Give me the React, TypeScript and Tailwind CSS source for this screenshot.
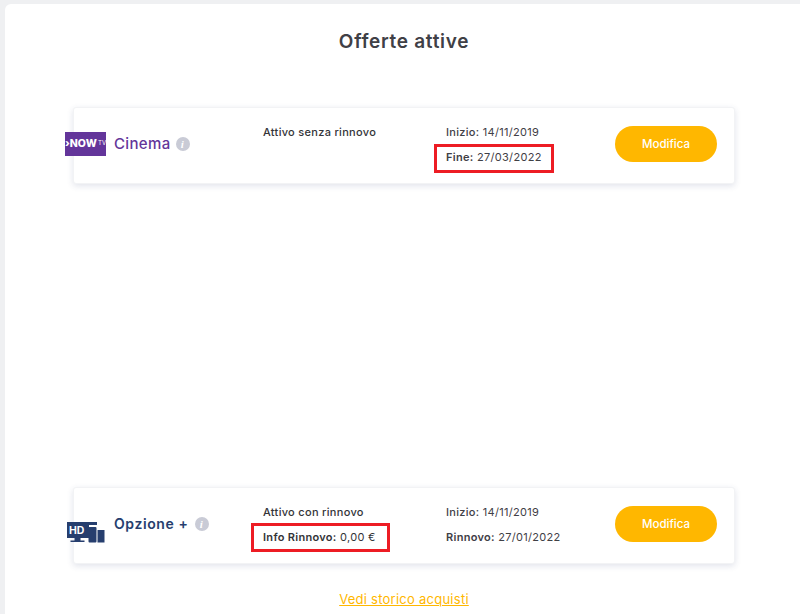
const font = { fontFamily: '"Inter", "Liberation Sans", sans-serif' };

function Info() {
  return (
    <span className="w-[14px] h-[14px] rounded-full bg-[#c9cbd6] flex items-center justify-center text-white text-[11px] leading-none font-bold italic font-['Liberation_Serif',serif]">
      i
    </span>
  );
}

function NowLogo() {
  return (
    <div className="w-[41px] h-[24px] -ml-2 bg-[#63359a] flex items-center justify-center shrink-0">
      <span className="text-white text-[10.500px] leading-none font-extrabold whitespace-nowrap tracking-[0.1px] flex items-center">
        ›NOW<span className="text-[6px] font-normal -mt-[3px] ml-px">TV</span>
      </span>
    </div>
  );
}

function HdLogo() {
  return (
    <svg width="38" height="21" viewBox="0 0 38 21" className="-ml-[7px] mt-[34px] shrink-0">
      <path d="M0 0h30v3h-8v13H0z" fill="#263e6e" />
      <path d="M7.500 16h6v2.500h4V20h-14v-1.500h4z" fill="#263e6e" />
      <rect x="21.500" y="5" width="8" height="15.500" rx="1" fill="#263e6e" />
      <rect x="30.500" y="8" width="7" height="12.500" fill="#263e6e" />
      <text x="2" y="12" fill="#fff" fontSize="10.500" fontWeight="700" fontFamily="Inter, sans-serif">HD</text>
    </svg>
  );
}

function Card({ logo, status, extra, start, end }: any) {
  return (
    <div className="h-[77px] w-[662px] bg-white rounded-[3px] shadow-[0_2px_6px_rgba(40,60,110,0.14)] border border-[#f2f3f5] grid grid-cols-[189px_183px_169px_102px] items-start">
      <div className="flex items-start h-full">{logo}</div>
      <div className="pt-[17px] flex flex-col gap-[11px] text-[11px] leading-[14px] tracking-[0.3px] text-[#333438]">
        <div className="font-medium">{status}</div>
        {extra}
      </div>
      <div className="pt-[17px] flex flex-col gap-[11px] text-[11px] leading-[14px] tracking-[0.3px] text-[#3f4046]">
        {start}
        {end}
      </div>
      <button className="mt-[18px] h-[36px] w-[102px] pt-px rounded-full bg-[#ffb700] text-white text-[11.500px] font-medium">
        Modifica
      </button>
    </div>
  );
}

function RedBox({ className }: { className: string }) {
  return <span className={`absolute border-[3px] border-[#ed1c24] ${className}`} />;
}

export default function App() {
  return (
    <div className="w-[800px] h-[614px] overflow-hidden bg-[#eff0f2] pl-[5px] pt-[4px]" style={font}>
      <div className="h-[610px] bg-white rounded-tl-md flex flex-col items-start pl-[68px]">
        <h1 className="w-[662px] text-center mt-[27px] text-[19px] leading-[22px] font-semibold tracking-[0.7px] text-[#3f4046]">
          Offerte attive
        </h1>
        <div className="mt-[54px]">
          <Card
            logo={
              <>
                <div className="mt-[24px] -ml-px"><NowLogo /></div>
                <div className="mt-[27px] ml-[8px] flex items-center gap-[5px] text-[15px] leading-[18px] font-medium tracking-[0.35px] text-[#63359a]">
                  Cinema <Info />
                </div>
              </>
            }
            status="Attivo senza rinnovo"
            start={<div><span className="font-medium">Inizio:</span> 14/11/2019</div>}
            end={
              <div className="relative">
                <RedBox className="-left-[12px] -top-[6px] w-[120px] h-[29px]" />
                <b className="font-semibold">Fine:</b> 27/03/2022
              </div>
            }
          />
        </div>
        <div className="mt-[303px]">
          <Card
            logo={
              <>
                <HdLogo />
                <div className="mt-[27px] ml-[9px] flex items-center gap-[6px] text-[14px] leading-[18px] font-semibold tracking-[0.6px] text-[#263e6e]">
                  Opzione + <Info />
                </div>
              </>
            }
            status="Attivo con rinnovo"
            extra={
              <div className="relative">
                <RedBox className="-left-[12px] -top-[7px] w-[139px] h-[29px]" />
                <b className="font-semibold">Info Rinnovo:</b> 0,00 €
              </div>
            }
            start={<div><span className="font-medium">Inizio:</span> 14/11/2019</div>}
            end={<div><b className="font-semibold">Rinnovo:</b> 27/01/2022</div>}
          />
        </div>
        <a className="w-[662px] text-center mt-[26px] text-[13px] leading-[18px] underline text-[#ffb700] tracking-[0.25px]">
          Vedi storico acquisti
        </a>
      </div>
    </div>
  );
}
